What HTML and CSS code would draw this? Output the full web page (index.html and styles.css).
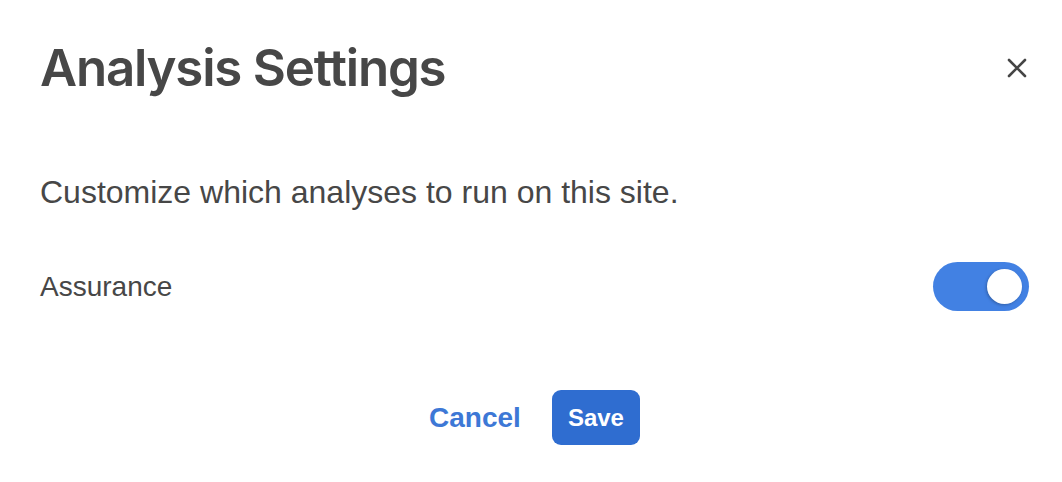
FILE: index.html
```html
<!DOCTYPE html>
<html lang="en">
<head>
<meta charset="utf-8">
<title>Analysis Settings</title>
<link rel="stylesheet" href="styles.css">
</head>
<body>
<div class="dialog">
  <header class="dialog-header">
    <h1 class="dialog-title">Analysis Settings</h1>
    <button class="close-btn" aria-label="Close">
      <svg width="20" height="20" viewBox="0 0 20 20" aria-hidden="true">
        <path d="M2 2 L18 18 M18 2 L2 18" stroke="#454545" stroke-width="2.6" stroke-linecap="round" fill="none"/>
      </svg>
    </button>
  </header>
  <p class="dialog-desc">Customize which analyses to run on this site.</p>
  <div class="setting-row">
    <span class="setting-label">Assurance</span>
    <span class="toggle is-on" role="switch" aria-checked="true"><span class="toggle-knob"></span></span>
  </div>
  <footer class="dialog-footer">
    <button class="btn btn-text">Cancel</button>
    <button class="btn btn-primary">Save</button>
  </footer>
</div>
</body>
</html>
```
FILE: styles.css
```css
html, body {
  margin: 0;
  padding: 0;
  background: #ffffff;
}

.dialog {
  width: 1062px;
  height: 482px;
  box-sizing: border-box;
  padding: 37px 33px 0 40px;
  display: flex;
  flex-direction: column;
  font-family: "Liberation Sans", Arial, sans-serif;
  color: #474747;
}

.dialog-header {
  display: flex;
  align-items: center;
  justify-content: space-between;
}

.dialog-title {
  margin: 0;
  font-family: Inter, "Open Sans", sans-serif;
  font-weight: 600;
  font-size: 51px;
  line-height: 61px;
  color: #474747;
  letter-spacing: -1.2px;
}

.close-btn {
  border: 0;
  background: none;
  padding: 0;
  margin-right: 2px;
  width: 20px;
  height: 20px;
  display: flex;
  cursor: pointer;
}

.dialog-desc {
  margin: 76px 0 0 0;
  font-size: 32px;
  line-height: 37px;
  color: #474747;
}

.setting-row {
  margin-top: 51px;
  display: flex;
  align-items: center;
  justify-content: space-between;
}

.setting-label {
  font-size: 28px;
  line-height: 32px;
  color: #474747;
}

.toggle {
  width: 96px;
  height: 49px;
  border-radius: 25px;
  background: #4281e3;
  display: flex;
  align-items: center;
  justify-content: flex-end;
  padding: 0 7px;
  box-sizing: border-box;
}

.toggle-knob {
  width: 35px;
  height: 35px;
  border-radius: 50%;
  background: #ffffff;
  box-shadow: -1px 1px 3px rgba(0, 0, 0, 0.25);
}

.dialog-footer {
  margin-top: 79px;
  display: flex;
  justify-content: center;
  align-items: center;
  gap: 31px;
}

.btn {
  font-family: "Liberation Sans", Arial, sans-serif;
  font-weight: 700;
  border: 0;
  cursor: pointer;
}

.btn-text {
  background: none;
  color: #3d78d6;
  font-size: 28px;
  padding: 0;
}

.btn-primary {
  background: #2f6dd0;
  color: #ffffff;
  font-size: 24px;
  width: 88px;
  height: 55px;
  border-radius: 9px;
  padding: 0;
}
```
